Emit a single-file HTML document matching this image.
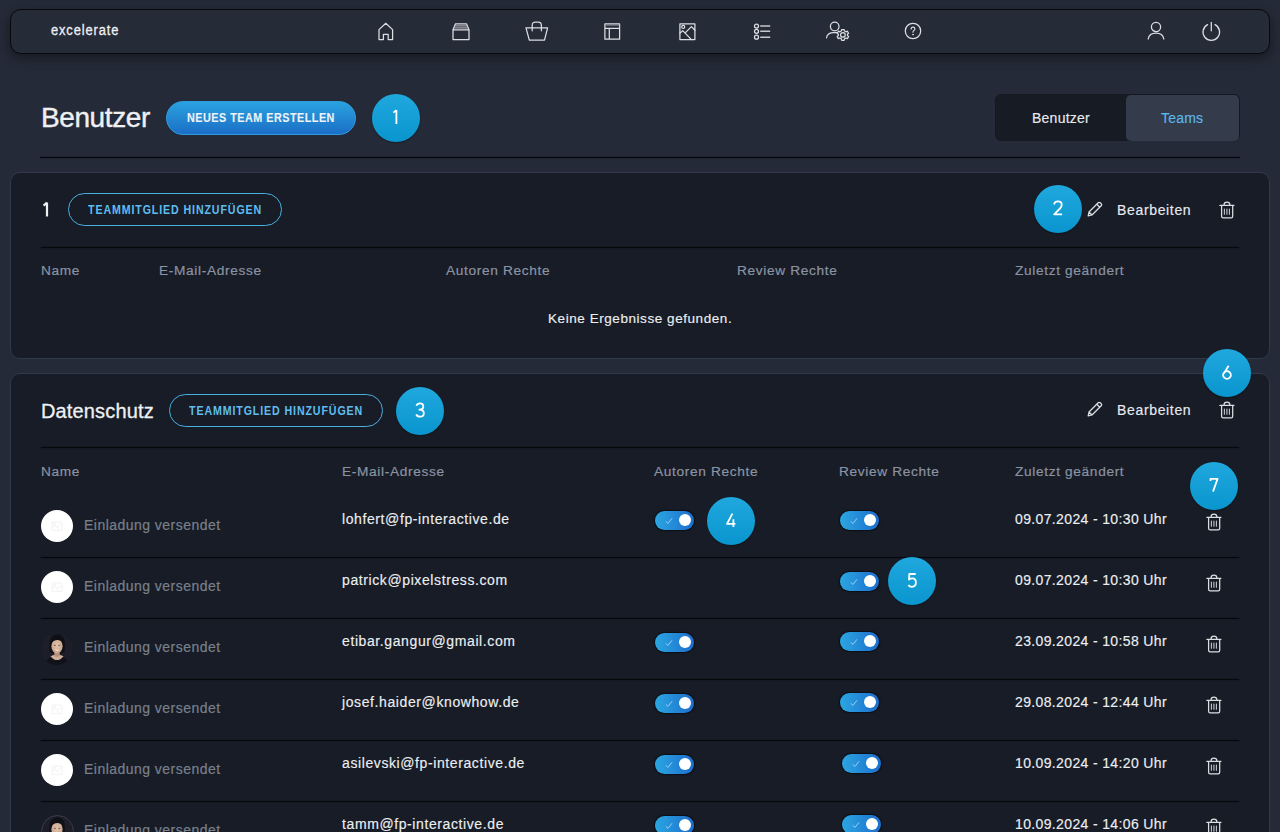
<!DOCTYPE html><html><head><meta charset="utf-8"><style>
*{margin:0;padding:0;box-sizing:border-box}
html,body{width:1280px;height:832px;overflow:hidden}
body{background:#242a37;font-family:"Liberation Sans",sans-serif;color:#eceef1;position:relative}
.a{position:absolute}
.t{position:absolute;white-space:nowrap;line-height:1}
.nav{left:10px;top:9px;width:1260px;height:45px;border:1px solid #07090d;border-radius:11px;background:#262b38;box-shadow:0 4px 12px rgba(0,0,0,.4)}
.ic{position:absolute;overflow:visible}
.ic *{fill:none;stroke:#dcdee2;stroke-width:1.25;stroke-linecap:round;stroke-linejoin:round}
.badge{position:absolute;width:48px;height:48px;border-radius:50%;background:linear-gradient(180deg,#20a8de,#0995ce);box-shadow:0 1px 2px rgba(0,0,0,.3)}
.badge svg{position:absolute;left:0;top:0}
.card{position:absolute;left:10px;width:1260px;border:1px solid #2f394a;border-radius:10px;background:#171c26}
.div{position:absolute;height:1px;background:#07080b;box-shadow:0 0 1px #07080b}
.hd{font-size:13.7px;color:#8b93a2;letter-spacing:.65px;-webkit-text-stroke:.2px currentColor}
.obtn{position:absolute;width:214px;height:33px;border:1.5px solid #4aaee0;border-radius:17px}
.cap{position:absolute;white-space:nowrap;line-height:1;font-weight:700;transform-origin:0 0}
.bear{font-size:14px;color:#e8eaee;letter-spacing:.66px;-webkit-text-stroke:.15px currentColor;}
.em{font-size:14px;color:#eceef1;letter-spacing:.6px;-webkit-text-stroke:.15px currentColor;}
.inv{font-size:14px;color:#79808b;letter-spacing:.47px;-webkit-text-stroke:.2px currentColor}
.dt{font-size:14px;color:#eceef1;letter-spacing:.36px;-webkit-text-stroke:.15px currentColor;}
.tg{position:absolute;width:38.5px;height:18.5px;border-radius:10px;background:linear-gradient(90deg,#2ba6e1,#1d6dcd);box-shadow:0 0 0 1px rgba(3,5,10,.5),0 0 3px rgba(0,0,0,.35)}
.tg:after{content:"";position:absolute;right:2.6px;top:3.1px;width:12.3px;height:12.3px;border-radius:50%;background:#fff}
.tg svg{position:absolute;left:10px;top:6px}
.av{position:absolute;width:32px;height:32px;border-radius:50%;background:#fff}
</style></head><body>
<div class="a nav"></div>
<div class="t" style="left:51px;top:23px;font-size:14px;font-weight:400;letter-spacing:.95px;-webkit-text-stroke:.3px currentColor;transform:scaleX(.92);transform-origin:0 0;color:#eef0f3">excelerate</div>

<svg class="ic" style="left:378px;top:22px" width="16" height="19" viewBox="0 0 16 19"><path d="M1 7.6 L7.8 1.3 L14.6 7.6 V17.6 H10.2 V12.3 H5.4 V17.6 H1 Z"/></svg>
<svg class="ic" style="left:452px;top:23px" width="18" height="18" viewBox="0 0 18 18"><path d="M1 6.8 H17 V16.6 H1 Z M1 6.8 L3.4 0.9 H14.6 L17 6.8"/><path d="M2.9 2.9 H15.1 M2.2 4.9 H15.8" style="stroke:#a4a7ad;stroke-width:1.2"/></svg>
<svg class="ic" style="left:525px;top:21px" width="24" height="20" viewBox="0 0 24 20"><path d="M1 6.9 H22.6 L19.5 19.2 H4.3 Z"/><path d="M7.2 9.8 V4.3 Q7.2 1.1 10.3 1.1 H13.3 Q16.4 1.1 16.4 4.3 V9.8"/></svg>
<svg class="ic" style="left:604px;top:23px" width="17" height="18" viewBox="0 0 17 18"><path d="M0.9 0.9 H15.6 V16.2 H0.9 Z M0.9 5.3 H15.6 M5.3 5.3 V16.2"/><path d="M1.4 2.1 H15.1" style="stroke:#8e9197;stroke-width:1"/></svg>
<svg class="ic" style="left:679px;top:23px" width="17" height="18" viewBox="0 0 17 18"><path d="M0.9 0.9 H15.9 V16.6 H0.9 Z"/><circle cx="4.2" cy="3.9" r="1.5"/><path d="M0.9 10.2 L3.7 7.6 L12.4 16.6 M6.4 9.6 L12.4 3.6 L15.9 7.3"/></svg>
<svg class="ic" style="left:753px;top:22px" width="19" height="18" viewBox="0 0 19 18"><circle cx="3.5" cy="4" r="2"/><circle cx="3.5" cy="9.3" r="2"/><circle cx="3.5" cy="15.2" r="2"/><path d="M7.2 4 H17.2 M7.2 9.3 H17.2 M7.2 15.2 H17.2" style="stroke-width:1.5;stroke:#c5c8cd;stroke-linecap:butt"/></svg>
<svg class="ic" style="left:825px;top:20px" width="26" height="23" viewBox="0 0 26 23"><circle cx="9.7" cy="6.5" r="4.3"/><path d="M1.6 17.8 Q2.2 12.6 8.6 12.6 H12.4"/><g transform="translate(17.9 14.9)"><circle r="2.3"/><path d="M-1.2 -5.4 H1.2 L1.6 -3.9 Q2.4 -3.6 3 -3.1 L4.5 -3.7 L5.7 -1.7 L4.5 -0.7 Q4.6 0 4.5 0.7 L5.7 1.7 L4.5 3.7 L3 3.1 Q2.4 3.6 1.6 3.9 L1.2 5.4 H-1.2 L-1.6 3.9 Q-2.4 3.6 -3 3.1 L-4.5 3.7 L-5.7 1.7 L-4.5 0.7 Q-4.6 0 -4.5 -0.7 L-5.7 -1.7 L-4.5 -3.7 L-3 -3.1 Q-2.4 -3.6 -1.6 -3.9 Z"/></g></svg>
<svg class="ic" style="left:904px;top:22px" width="18" height="18" viewBox="0 0 18 18"><circle cx="9" cy="9" r="7.7"/><path d="M7.1 7.1 Q7.1 5.1 9 5.1 Q10.9 5.1 10.9 6.9 Q10.9 8.1 9.6 8.8 Q9 9.1 9 10.2" style="stroke-width:1.15"/><circle cx="9" cy="12.6" r=".45" style="fill:#dcdee2;stroke-width:.9"/></svg>
<svg class="ic" style="left:1146px;top:21px" width="20" height="20" viewBox="0 0 20 20"><circle cx="10" cy="6" r="4.6"/><path d="M2.2 18 Q3.2 12.2 10 12.2 Q16.8 12.2 17.8 18"/></svg>
<svg class="ic" style="left:1201px;top:21px" width="21" height="21" viewBox="0 0 21 21"><path d="M6.6 3.6 A8.3 8.3 0 1 0 14 3.6"/><path d="M10.3 1.4 V9.8"/></svg>

<div class="t" style="left:41px;top:103.5px;font-size:28px;letter-spacing:-.4px;color:#eef0f3;-webkit-text-stroke:.4px currentColor">Benutzer</div>
<div class="a" style="left:166px;top:101px;width:190px;height:34px;border-radius:17px;background:linear-gradient(180deg,#2aa2df,#1b6ec6);border:1px solid #2f9bdc"></div>
<div class="cap" style="left:187px;top:112px;font-size:12px;letter-spacing:.55px;color:#eef3f8;transform:scaleX(.9);-webkit-text-stroke:.1px currentColor">NEUES TEAM ERSTELLEN</div>
<div class="badge" style="left:372px;top:94px"><svg width="48" height="48" viewBox="-24 -24 48 48"><path d="M0.4 -7.9 V5.9 M0.4 -7.9 L-2.6 -5.4" fill="none" stroke="#fff" stroke-width="1.8" stroke-linecap="butt" stroke-linejoin="round"/></svg></div>
<div class="a" style="left:995px;top:94px;width:245px;height:47px;border-radius:6px;background:#171b23;border:1px solid #141820"></div>
<div class="a" style="left:1126px;top:95px;width:113px;height:46px;border-radius:5px;background:#343c4c"></div>
<div class="t" style="left:1032px;top:111px;font-size:14px;letter-spacing:.25px;color:#e8eaee;-webkit-text-stroke:.15px currentColor;">Benutzer</div>
<div class="t" style="left:1161px;top:110.5px;font-size:14px;letter-spacing:.2px;color:#5cb7e8;-webkit-text-stroke:.15px currentColor;">Teams</div>
<div class="div" style="left:40px;top:157px;width:1200px"></div>
<div class="card" style="top:172px;height:187px"></div>
<svg class="a" style="left:40px;top:200px" width="12" height="20" viewBox="0 0 12 20"><path d="M7 2.6 V16.4 M7 2.6 L3.6 5.6" fill="none" stroke="#eef0f3" stroke-width="2.2" stroke-linejoin="round"/></svg>
<div class="obtn" style="left:68px;top:193px"></div>
<div class="cap" style="left:88px;top:204px;font-size:12px;letter-spacing:1px;color:#5fbdee;transform:scaleX(.887)">TEAMMITGLIED HINZUFÜGEN</div>
<svg class="ic" style="left:1087px;top:201px" width="16" height="16" viewBox="0 0 16 16"><path d="M1.2 14.8 L2 11 L11.2 1.8 Q12.2 0.8 13.2 1.8 L14.2 2.8 Q15.2 3.8 14.2 4.8 L5 14 Z M9.8 3.2 L12.8 6.2 M2.2 11.2 L4.8 13.8"/></svg>
<div class="t bear" style="left:1117px;top:203px">Bearbeiten</div>
<svg class="ic" style="left:1219px;top:201px" width="16.0" height="19.0" viewBox="0 0 16 19"><path d="M0.9 4.4 H14.9 M5.1 4.4 V3.6 Q5.1 1.2 7.9 1.2 Q10.8 1.2 10.8 3.6 V4.4 M2.6 4.4 V15.3 Q2.6 16.9 4.2 16.9 H12.1 Q13.7 16.9 13.7 15.3 V4.4"/><path d="M5.4 8.1 V13.2 M7.9 8.1 V13.2 M10.4 8.1 V13.2" style="stroke-width:1.1;stroke:#c3c6cc"/></svg>
<div class="badge" style="left:1034px;top:185px"><svg width="48" height="48" viewBox="-24 -24 48 48"><path d="M-3.7 -4.4 Q-3.7 -7.6 0 -7.6 Q3.7 -7.6 3.7 -4.3 Q3.7 -2.6 2.4 -1 L-3.8 5.3 H4.1" fill="none" stroke="#fff" stroke-width="1.8" stroke-linecap="butt" stroke-linejoin="round"/></svg></div>
<div class="div" style="left:41px;top:247px;width:1198px"></div>
<div class="t hd" style="left:41px;top:264px">Name</div>
<div class="t hd" style="left:159px;top:264px">E-Mail-Adresse</div>
<div class="t hd" style="left:446px;top:264px">Autoren Rechte</div>
<div class="t hd" style="left:737px;top:264px">Review Rechte</div>
<div class="t hd" style="left:1015px;top:264px">Zuletzt geändert</div>
<div class="t" style="left:548px;top:312px;font-size:13.5px;letter-spacing:.56px;color:#eceef1;-webkit-text-stroke:.15px currentColor;">Keine Ergebnisse gefunden.</div>
<div class="card" style="top:373px;height:480px"></div>
<div class="t" style="left:41px;top:401px;font-size:20px;letter-spacing:.15px;color:#eef0f3;-webkit-text-stroke:.3px currentColor">Datenschutz</div>
<div class="obtn" style="left:169px;top:394px"></div>
<div class="cap" style="left:189px;top:405px;font-size:12px;letter-spacing:1px;color:#5fbdee;transform:scaleX(.887)">TEAMMITGLIED HINZUFÜGEN</div>
<div class="badge" style="left:396px;top:387px"><svg width="48" height="48" viewBox="-24 -24 48 48"><path d="M-3.6 -5.3 Q-2.8 -7.6 0 -7.6 Q3.3 -7.6 3.3 -4.4 Q3.3 -1.3 -0.6 -1.3 Q3.8 -1.3 3.8 2.2 Q3.8 5.7 0 5.7 Q-2.9 5.7 -3.8 3.4" fill="none" stroke="#fff" stroke-width="1.8" stroke-linecap="butt" stroke-linejoin="round"/></svg></div>
<svg class="ic" style="left:1087px;top:401px" width="16" height="16" viewBox="0 0 16 16"><path d="M1.2 14.8 L2 11 L11.2 1.8 Q12.2 0.8 13.2 1.8 L14.2 2.8 Q15.2 3.8 14.2 4.8 L5 14 Z M9.8 3.2 L12.8 6.2 M2.2 11.2 L4.8 13.8"/></svg>
<div class="t bear" style="left:1117px;top:403px">Bearbeiten</div>
<svg class="ic" style="left:1219px;top:401px" width="16.0" height="19.0" viewBox="0 0 16 19"><path d="M0.9 4.4 H14.9 M5.1 4.4 V3.6 Q5.1 1.2 7.9 1.2 Q10.8 1.2 10.8 3.6 V4.4 M2.6 4.4 V15.3 Q2.6 16.9 4.2 16.9 H12.1 Q13.7 16.9 13.7 15.3 V4.4"/><path d="M5.4 8.1 V13.2 M7.9 8.1 V13.2 M10.4 8.1 V13.2" style="stroke-width:1.1;stroke:#c3c6cc"/></svg>
<div class="div" style="left:41px;top:447px;width:1198px"></div>
<div class="t hd" style="left:41px;top:465px">Name</div>
<div class="t hd" style="left:342px;top:465px">E-Mail-Adresse</div>
<div class="t hd" style="left:654px;top:465px">Autoren Rechte</div>
<div class="t hd" style="left:839px;top:465px">Review Rechte</div>
<div class="t hd" style="left:1015px;top:465px">Zuletzt geändert</div>
<div class="av" style="left:41px;top:510px"><svg width="32" height="32" viewBox="0 0 32 32"><path d="M11.2 12 H21 V20.6 H11.2 Z M11.2 18 L14 15.2 L18.5 20 M16 17.5 L19 14.5 L21 16.5" fill="none" stroke="#eeeff1" stroke-width=".8"/><circle cx="13.6" cy="14" r=".9" fill="none" stroke="#eeeff1" stroke-width=".7"/></svg></div>
<div class="t inv" style="left:84px;top:518px">Einladung versendet</div>
<div class="t em" style="left:342px;top:512px">lohfert@fp-interactive.de</div>
<div class="tg" style="left:655px;top:511px"><svg width="9" height="8" viewBox="0 0 9 8"><path d="M1 4.6 L3 6.4 L6.8 1.6" fill="none" stroke="#9fd2f2" stroke-width=".95" stroke-linecap="round"/></svg></div>
<div class="tg" style="left:840px;top:511px"><svg width="9" height="8" viewBox="0 0 9 8"><path d="M1 4.6 L3 6.4 L6.8 1.6" fill="none" stroke="#9fd2f2" stroke-width=".95" stroke-linecap="round"/></svg></div>
<div class="t dt" style="left:1015px;top:512px">09.07.2024 - 10:30 Uhr</div>
<svg class="ic" style="left:1206px;top:513px" width="16.0" height="19.0" viewBox="0 0 16 19"><path d="M0.9 4.4 H14.9 M5.1 4.4 V3.6 Q5.1 1.2 7.9 1.2 Q10.8 1.2 10.8 3.6 V4.4 M2.6 4.4 V15.3 Q2.6 16.9 4.2 16.9 H12.1 Q13.7 16.9 13.7 15.3 V4.4"/><path d="M5.4 8.1 V13.2 M7.9 8.1 V13.2 M10.4 8.1 V13.2" style="stroke-width:1.1;stroke:#c3c6cc"/></svg>
<div class="div" style="left:41px;top:557px;width:1198px"></div>
<div class="av" style="left:41px;top:571px"><svg width="32" height="32" viewBox="0 0 32 32"><path d="M11.2 12 H21 V20.6 H11.2 Z M11.2 18 L14 15.2 L18.5 20 M16 17.5 L19 14.5 L21 16.5" fill="none" stroke="#eeeff1" stroke-width=".8"/><circle cx="13.6" cy="14" r=".9" fill="none" stroke="#eeeff1" stroke-width=".7"/></svg></div>
<div class="t inv" style="left:84px;top:579px">Einladung versendet</div>
<div class="t em" style="left:342px;top:573px">patrick@pixelstress.com</div>
<div class="tg" style="left:840px;top:572px"><svg width="9" height="8" viewBox="0 0 9 8"><path d="M1 4.6 L3 6.4 L6.8 1.6" fill="none" stroke="#9fd2f2" stroke-width=".95" stroke-linecap="round"/></svg></div>
<div class="t dt" style="left:1015px;top:573px">09.07.2024 - 10:30 Uhr</div>
<svg class="ic" style="left:1206px;top:574px" width="16.0" height="19.0" viewBox="0 0 16 19"><path d="M0.9 4.4 H14.9 M5.1 4.4 V3.6 Q5.1 1.2 7.9 1.2 Q10.8 1.2 10.8 3.6 V4.4 M2.6 4.4 V15.3 Q2.6 16.9 4.2 16.9 H12.1 Q13.7 16.9 13.7 15.3 V4.4"/><path d="M5.4 8.1 V13.2 M7.9 8.1 V13.2 M10.4 8.1 V13.2" style="stroke-width:1.1;stroke:#c3c6cc"/></svg>
<div class="div" style="left:41px;top:618px;width:1198px"></div>
<svg class="a" style="left:41px;top:632.5px" width="32" height="32" viewBox="0 0 32 32"><defs><clipPath id="c2"><circle cx="16" cy="16" r="16"/></clipPath><radialGradient id="f2" cx="50%" cy="45%" r="60%"><stop offset="0" stop-color="#e2c3ad"/><stop offset="1" stop-color="#c59f88"/></radialGradient></defs><g clip-path="url(#c2)"><rect width="32" height="32" fill="#1d1e29"/><path d="M4 33 Q5 24.5 12 23.5 L20 23.5 Q27 24.5 28 33 Z" fill="#101119"/><path d="M9.5 23.2 Q16 31 22.5 23.2 Q19.5 21.5 16 21.5 Q12.5 21.5 9.5 23.2Z" fill="#cfae98"/><path d="M8.6 19 Q7.6 10 9.5 5.5 Q12 1.2 16.2 1.2 Q21 1.2 23 5.5 Q24.6 10 23.4 19 Q20 21 16 21 Q12 21 8.6 19Z" fill="#101116"/><path d="M13.3 19 V23 Q16 24.5 18.7 23 V19Z" fill="#b8907b"/><ellipse cx="16" cy="13.2" rx="5.6" ry="7.3" fill="url(#f2)"/><path d="M9.8 11 Q10.5 4.3 16.3 4.3 Q21.8 4.3 22.3 10 Q20 6.8 16.5 7 Q12.4 7.2 9.8 11Z" fill="#0f1015"/><path d="M13 12.4 H14.8 M17.3 12.4 H19.1" stroke="#5a4238" stroke-width=".8"/><path d="M14.3 16.8 Q16.1 18 17.9 16.8" stroke="#f3e6df" stroke-width="1" fill="none"/></g></svg>
<div class="t inv" style="left:84px;top:640px">Einladung versendet</div>
<div class="t em" style="left:342px;top:634px">etibar.gangur@gmail.com</div>
<div class="tg" style="left:655px;top:633px"><svg width="9" height="8" viewBox="0 0 9 8"><path d="M1 4.6 L3 6.4 L6.8 1.6" fill="none" stroke="#9fd2f2" stroke-width=".95" stroke-linecap="round"/></svg></div>
<div class="tg" style="left:840px;top:632px"><svg width="9" height="8" viewBox="0 0 9 8"><path d="M1 4.6 L3 6.4 L6.8 1.6" fill="none" stroke="#9fd2f2" stroke-width=".95" stroke-linecap="round"/></svg></div>
<div class="t dt" style="left:1015px;top:634px">23.09.2024 - 10:58 Uhr</div>
<svg class="ic" style="left:1206px;top:635px" width="16.0" height="19.0" viewBox="0 0 16 19"><path d="M0.9 4.4 H14.9 M5.1 4.4 V3.6 Q5.1 1.2 7.9 1.2 Q10.8 1.2 10.8 3.6 V4.4 M2.6 4.4 V15.3 Q2.6 16.9 4.2 16.9 H12.1 Q13.7 16.9 13.7 15.3 V4.4"/><path d="M5.4 8.1 V13.2 M7.9 8.1 V13.2 M10.4 8.1 V13.2" style="stroke-width:1.1;stroke:#c3c6cc"/></svg>
<div class="div" style="left:41px;top:679px;width:1198px"></div>
<div class="av" style="left:41px;top:693px"><svg width="32" height="32" viewBox="0 0 32 32"><path d="M11.2 12 H21 V20.6 H11.2 Z M11.2 18 L14 15.2 L18.5 20 M16 17.5 L19 14.5 L21 16.5" fill="none" stroke="#eeeff1" stroke-width=".8"/><circle cx="13.6" cy="14" r=".9" fill="none" stroke="#eeeff1" stroke-width=".7"/></svg></div>
<div class="t inv" style="left:84px;top:701px">Einladung versendet</div>
<div class="t em" style="left:342px;top:695px">josef.haider@knowhow.de</div>
<div class="tg" style="left:655px;top:694px"><svg width="9" height="8" viewBox="0 0 9 8"><path d="M1 4.6 L3 6.4 L6.8 1.6" fill="none" stroke="#9fd2f2" stroke-width=".95" stroke-linecap="round"/></svg></div>
<div class="tg" style="left:840px;top:693px"><svg width="9" height="8" viewBox="0 0 9 8"><path d="M1 4.6 L3 6.4 L6.8 1.6" fill="none" stroke="#9fd2f2" stroke-width=".95" stroke-linecap="round"/></svg></div>
<div class="t dt" style="left:1015px;top:695px">29.08.2024 - 12:44 Uhr</div>
<svg class="ic" style="left:1206px;top:696px" width="16.0" height="19.0" viewBox="0 0 16 19"><path d="M0.9 4.4 H14.9 M5.1 4.4 V3.6 Q5.1 1.2 7.9 1.2 Q10.8 1.2 10.8 3.6 V4.4 M2.6 4.4 V15.3 Q2.6 16.9 4.2 16.9 H12.1 Q13.7 16.9 13.7 15.3 V4.4"/><path d="M5.4 8.1 V13.2 M7.9 8.1 V13.2 M10.4 8.1 V13.2" style="stroke-width:1.1;stroke:#c3c6cc"/></svg>
<div class="div" style="left:41px;top:740px;width:1198px"></div>
<div class="av" style="left:41px;top:754px"><svg width="32" height="32" viewBox="0 0 32 32"><path d="M11.2 12 H21 V20.6 H11.2 Z M11.2 18 L14 15.2 L18.5 20 M16 17.5 L19 14.5 L21 16.5" fill="none" stroke="#eeeff1" stroke-width=".8"/><circle cx="13.6" cy="14" r=".9" fill="none" stroke="#eeeff1" stroke-width=".7"/></svg></div>
<div class="t inv" style="left:84px;top:762px">Einladung versendet</div>
<div class="t em" style="left:342px;top:756px">asilevski@fp-interactive.de</div>
<div class="tg" style="left:655px;top:755px"><svg width="9" height="8" viewBox="0 0 9 8"><path d="M1 4.6 L3 6.4 L6.8 1.6" fill="none" stroke="#9fd2f2" stroke-width=".95" stroke-linecap="round"/></svg></div>
<div class="tg" style="left:842px;top:754px"><svg width="9" height="8" viewBox="0 0 9 8"><path d="M1 4.6 L3 6.4 L6.8 1.6" fill="none" stroke="#9fd2f2" stroke-width=".95" stroke-linecap="round"/></svg></div>
<div class="t dt" style="left:1015px;top:756px">10.09.2024 - 14:20 Uhr</div>
<svg class="ic" style="left:1206px;top:757px" width="16.0" height="19.0" viewBox="0 0 16 19"><path d="M0.9 4.4 H14.9 M5.1 4.4 V3.6 Q5.1 1.2 7.9 1.2 Q10.8 1.2 10.8 3.6 V4.4 M2.6 4.4 V15.3 Q2.6 16.9 4.2 16.9 H12.1 Q13.7 16.9 13.7 15.3 V4.4"/><path d="M5.4 8.1 V13.2 M7.9 8.1 V13.2 M10.4 8.1 V13.2" style="stroke-width:1.1;stroke:#c3c6cc"/></svg>
<div class="div" style="left:41px;top:801px;width:1198px"></div>
<svg class="a" style="left:41px;top:815.5px" width="32" height="32" viewBox="0 0 32 32"><defs><clipPath id="c5"><circle cx="16" cy="16" r="16"/></clipPath><radialGradient id="f5" cx="50%" cy="45%" r="60%"><stop offset="0" stop-color="#e2c3ad"/><stop offset="1" stop-color="#c59f88"/></radialGradient></defs><g clip-path="url(#c5)"><rect width="32" height="32" fill="#1d1e29"/><path d="M4 33 Q5 24.5 12 23.5 L20 23.5 Q27 24.5 28 33 Z" fill="#101119"/><path d="M9.5 23.2 Q16 31 22.5 23.2 Q19.5 21.5 16 21.5 Q12.5 21.5 9.5 23.2Z" fill="#cfae98"/><path d="M8.6 19 Q7.6 10 9.5 5.5 Q12 1.2 16.2 1.2 Q21 1.2 23 5.5 Q24.6 10 23.4 19 Q20 21 16 21 Q12 21 8.6 19Z" fill="#101116"/><path d="M13.3 19 V23 Q16 24.5 18.7 23 V19Z" fill="#b8907b"/><ellipse cx="16" cy="13.2" rx="5.6" ry="7.3" fill="url(#f5)"/><path d="M9.8 11 Q10.5 4.3 16.3 4.3 Q21.8 4.3 22.3 10 Q20 6.8 16.5 7 Q12.4 7.2 9.8 11Z" fill="#0f1015"/><path d="M13 12.4 H14.8 M17.3 12.4 H19.1" stroke="#5a4238" stroke-width=".8"/><path d="M14.3 16.8 Q16.1 18 17.9 16.8" stroke="#f3e6df" stroke-width="1" fill="none"/></g></svg>
<div class="a" style="left:40.5px;top:815px;width:33px;height:33px;border-radius:50%;border:1px solid #3b3f4b"></div>
<div class="t inv" style="left:84px;top:823px">Einladung versendet</div>
<div class="t em" style="left:342px;top:817px">tamm@fp-interactive.de</div>
<div class="tg" style="left:655px;top:816px"><svg width="9" height="8" viewBox="0 0 9 8"><path d="M1 4.6 L3 6.4 L6.8 1.6" fill="none" stroke="#9fd2f2" stroke-width=".95" stroke-linecap="round"/></svg></div>
<div class="tg" style="left:842px;top:815px"><svg width="9" height="8" viewBox="0 0 9 8"><path d="M1 4.6 L3 6.4 L6.8 1.6" fill="none" stroke="#9fd2f2" stroke-width=".95" stroke-linecap="round"/></svg></div>
<div class="t dt" style="left:1015px;top:817px">10.09.2024 - 14:06 Uhr</div>
<svg class="ic" style="left:1206px;top:818px" width="16.0" height="19.0" viewBox="0 0 16 19"><path d="M0.9 4.4 H14.9 M5.1 4.4 V3.6 Q5.1 1.2 7.9 1.2 Q10.8 1.2 10.8 3.6 V4.4 M2.6 4.4 V15.3 Q2.6 16.9 4.2 16.9 H12.1 Q13.7 16.9 13.7 15.3 V4.4"/><path d="M5.4 8.1 V13.2 M7.9 8.1 V13.2 M10.4 8.1 V13.2" style="stroke-width:1.1;stroke:#c3c6cc"/></svg>
<div class="badge" style="left:1203px;top:349px"><svg width="48" height="48" viewBox="-24 -24 48 48"><path d="M1.6 -7.3 L-3.0 0.2 M3.9 2.0 A3.9 3.8 0 1 1 -3.9 2.0 A3.9 3.8 0 1 1 3.9 2.0" fill="none" stroke="#fff" stroke-width="1.8" stroke-linecap="butt" stroke-linejoin="round"/></svg></div>
<div class="badge" style="left:1190px;top:462px"><svg width="48" height="48" viewBox="-24 -24 48 48"><path d="M-3.5 -5.0 V-7.2 H3.6 L-1.0 5.6" fill="none" stroke="#fff" stroke-width="1.8" stroke-linecap="butt" stroke-linejoin="round"/></svg></div>
<div class="badge" style="left:707px;top:497px"><svg width="48" height="48" viewBox="-24 -24 48 48"><path d="M1.4 -7.3 L-4.0 2.8 H4.4 M2.4 -1.8 V5.9" fill="none" stroke="#fff" stroke-width="1.8" stroke-linecap="butt" stroke-linejoin="round"/></svg></div>
<div class="badge" style="left:888px;top:557px"><svg width="48" height="48" viewBox="-24 -24 48 48"><path d="M3.7 -7.0 H-2.7 L-3.0 -1.5 Q-1.8 -2.6 0.2 -2.6 Q3.9 -2.6 3.9 1.6 Q3.9 5.8 0 5.8 Q-2.7 5.8 -3.6 4.0" fill="none" stroke="#fff" stroke-width="1.8" stroke-linecap="butt" stroke-linejoin="round"/></svg></div>
</body></html>
